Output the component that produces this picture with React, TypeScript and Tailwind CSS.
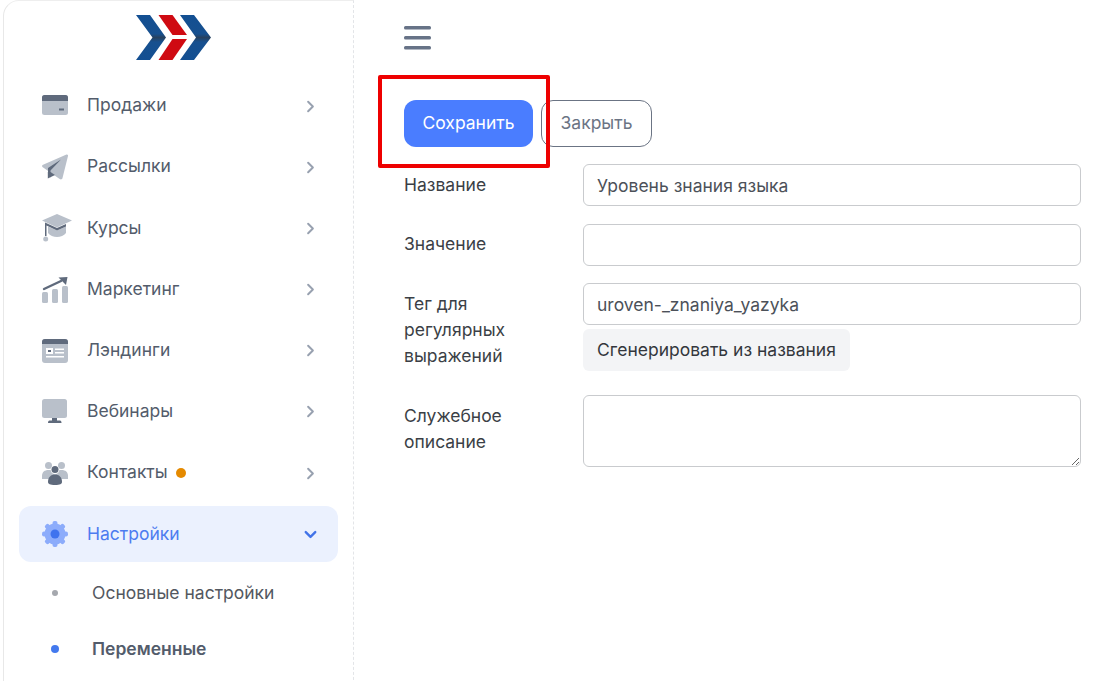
import { ChevronDown, ChevronRight } from "lucide-react";
import type { ReactNode } from "react";

const LIGHT = "#b9c0ca";
const DARK = "#5f6a7c";

function Logo() {
  return (
    <svg width="76" height="45" viewBox="0 0 76 46" preserveAspectRatio="none" aria-label="logo">
      <defs>
        <linearGradient id="blueBand" x1="0" y1="0" x2="0" y2="1">
          <stop offset="0" stopColor="#134f92" />
          <stop offset="0.42" stopColor="#17508f" />
          <stop offset="0.5" stopColor="#27415f" />
          <stop offset="0.6" stopColor="#17508f" />
          <stop offset="1" stopColor="#134f92" />
        </linearGradient>
      </defs>
      <path d="M0 0H14L30 23L14 46H0L16.500 23Z" fill="url(#blueBand)" />
      <path d="M44 0H58L75 23L58 46H44L60 23Z" fill="url(#blueBand)" />
      <path d="M22.500 0H36.500L51 20.500H36.500Z" fill="#cf0a12" />
      <path d="M36.500 24.500H51L36.500 46H22.500Z" fill="#cf0a12" />
    </svg>
  );
}

function CardIcon() {
  return (
    <svg width="26" height="26" viewBox="0 0 26 26">
      <rect y="2" width="26" height="20" rx="2.500" fill={LIGHT} />
      <path d="M0 8V4.500A2.500 2.500 0 0 1 2.500 2H23.500A2.500 2.500 0 0 1 26 4.500V8Z" fill={DARK} />
      <rect x="17" y="15.500" width="5" height="2" fill={DARK} />
    </svg>
  );
}

function PlaneIcon() {
  return (
    <svg width="26" height="26" viewBox="0 0 26 26">
      <path d="M24.500 0.500C25.500 0.200 26.200 1 26 2L20.500 24C20.200 25.500 18.800 25.800 17.700 25L0.800 13.300C-0.300 12.500 -0.100 11.200 1 10.700Z" fill={LIGHT} />
      <path d="M6 14L19 5.500L8.500 16.500V23.500L6 21Z" fill={DARK} />
      <path d="M8.500 18L13 21L5.800 24.500V18Z" fill={DARK} />
    </svg>
  );
}

function CapIcon() {
  return (
    <svg width="30" height="28" viewBox="0 0 30 28">
      <path d="M15 0L30 6.500L15 13.500L0 6.500Z" fill={LIGHT} />
      <path d="M6 12.500L15 16.500L24 12.500V19C22 21.500 18.500 23 15 23C11.500 23 8 21.500 6 19Z" fill={LIGHT} />
      <path d="M3 8.500L15 14L24 10V12.500L15 16.500L4.500 11.500V22H3Z" fill={DARK} />
      <circle cx="3.700" cy="25" r="2.500" fill={LIGHT} />
    </svg>
  );
}

function ChartIcon() {
  return (
    <svg width="26" height="26" viewBox="0 0 26 26">
      <rect y="15" width="6" height="11" rx="1.500" fill={LIGHT} />
      <rect x="10" y="12" width="6" height="14" rx="1.500" fill={LIGHT} />
      <rect x="20" y="9" width="6" height="17" rx="1.500" fill={LIGHT} />
      <path d="M2 12L19 4" stroke={DARK} strokeWidth="2.400" strokeLinecap="round" />
      <path d="M16.500 0.500L25.500 0L24 8Z" fill={DARK} />
    </svg>
  );
}

function LandingIcon() {
  return (
    <svg width="26" height="24" viewBox="0 0 26 24">
      <rect width="26" height="24" rx="3" fill={LIGHT} />
      <path d="M0 5V3A3 3 0 0 1 3 0H23A3 3 0 0 1 26 3V5Z" fill={DARK} />
      <rect x="4" y="9" width="7" height="6" fill="#fff" />
      <rect x="6" y="11" width="3" height="2" fill={DARK} />
      <rect x="13" y="9.500" width="9" height="1.500" fill="#fff" />
      <rect x="13" y="13" width="9" height="1.500" fill="#fff" />
      <rect x="4" y="17" width="18" height="1.500" fill="#fff" />
    </svg>
  );
}

function MonitorIcon() {
  return (
    <svg width="26" height="26" viewBox="0 0 26 26">
      <rect width="25" height="19" rx="2.500" fill={LIGHT} />
      <path d="M10 19H15V21.500H18C19 21.500 19.500 22.500 19.500 24H6C6 22.500 6.500 21.500 7.500 21.500H10Z" fill={DARK} />
    </svg>
  );
}

function PeopleIcon() {
  return (
    <svg width="26" height="24" viewBox="0 0 26 24">
      <circle cx="6.500" cy="4.500" r="3.500" fill={LIGHT} />
      <circle cx="19.500" cy="4.500" r="3.500" fill={LIGHT} />
      <path d="M0 15C0 11 2.500 9 6.500 9C10.500 9 13 11 13 15V18H0Z" fill={LIGHT} />
      <path d="M13 15C13 11 15.500 9 19.500 9C23.500 9 26 11 26 15V18H13Z" fill={LIGHT} />
      <circle cx="13" cy="9" r="4" fill="#fff" />
      <circle cx="13" cy="8.500" r="3.500" fill={DARK} />
      <path d="M6 21C6 16 9 13.500 13 13.500C17 13.500 20 16 20 21C20 23 18 24 13 24C8 24 6 23 6 21Z" fill={DARK} />
    </svg>
  );
}

function GearIcon() {
  return (
    <svg width="26" height="26" viewBox="0 0 26 26">
      <g fill="#8cacfb">
        <circle cx="13" cy="13" r="10.500" />
        <rect x="10.500" y="0" width="5" height="26" rx="2" />
        <rect x="10.500" y="0" width="5" height="26" rx="2" transform="rotate(45 13 13)" />
        <rect x="10.500" y="0" width="5" height="26" rx="2" transform="rotate(90 13 13)" />
        <rect x="10.500" y="0" width="5" height="26" rx="2" transform="rotate(135 13 13)" />
      </g>
      <circle cx="13" cy="13" r="4.500" fill="#3f73ee" />
    </svg>
  );
}

function MenuItem({ icon, label, dot, active }: { icon: ReactNode; label: string; dot?: boolean; active?: boolean }) {
  return (
    <div className={`flex h-14 items-center rounded-xl pl-[23px] pr-[18px] ${active ? "bg-[#ebf1fe] text-[#4d7cf0]" : "text-[#535c6b]"}`}>
      <span className="flex w-[45px] shrink-0 items-center">{icon}</span>
      <span className="-translate-y-px text-[17.500px] leading-none">{label}</span>
      {dot && <span className="ml-[8px] h-[10px] w-[10px] rounded-full bg-[#e58a00]" />}
      {active ? (
        <ChevronDown size={19} strokeWidth={3} className="ml-auto text-[#4173e8]" />
      ) : (
        <ChevronRight size={19} strokeWidth={2.500} className="ml-auto text-[#98a1b0]" />
      )}
    </div>
  );
}

const INPUT_CLS =
  "block h-[42px] w-full rounded-md border border-[#c9cbce] bg-white px-[13px] text-[17.500px] text-[#4c5159] outline-none";

export default function App() {
  return (
    <div className="flex h-[681px] w-[1107px] overflow-hidden bg-white font-['Inter',sans-serif]">
      {/* Sidebar */}
      <aside className="ml-[3px] flex h-[700px] w-[351px] shrink-0 flex-col rounded-tl-2xl border-l border-t border-r border-l-[#e8e8e8] border-t-[#eeeeee] border-r-[#e3e5e8] px-[15px] [border-right-style:dashed]">
        <div className="flex h-[74px] shrink-0 items-end justify-center pb-[15px] pr-[10px]">
          <Logo />
        </div>
        <nav className="mt-[3px] flex flex-col gap-[5.200px]">
          <MenuItem icon={<CardIcon />} label="Продажи" />
          <MenuItem icon={<PlaneIcon />} label="Рассылки" />
          <MenuItem icon={<CapIcon />} label="Курсы" />
          <MenuItem icon={<ChartIcon />} label="Маркетинг" />
          <MenuItem icon={<LandingIcon />} label="Лэндинги" />
          <MenuItem icon={<MonitorIcon />} label="Вебинары" />
          <MenuItem icon={<PeopleIcon />} label="Контакты" dot />
          <MenuItem icon={<GearIcon />} label="Настройки" active />
        </nav>
        <div className="mt-[3px] flex flex-col text-[17.500px]">
          <div className="flex h-[56px] items-center pl-[33px] text-[#535860]">
            <span className="h-[6px] w-[6px] rounded-full bg-[#a5a8ae]" />
            <span className="ml-[34px]">Основные настройки</span>
          </div>
          <div className="flex h-[56px] items-center pl-[32px] font-semibold text-[#535c6b]">
            <span className="h-[8px] w-[8px] rounded-full bg-[#4379ee]" />
            <span className="ml-[33px]">Переменные</span>
          </div>
        </div>
      </aside>

      {/* Main */}
      <main className="relative flex-1 pl-[50px] pr-[26px]">
        <svg width="28" height="24" viewBox="0 0 28 24" className="mt-[26px] block" aria-label="menu">
          <g fill="#677387">
            <rect y="0" width="27" height="3.500" rx="1.500" />
            <rect y="10" width="27" height="3.500" rx="1.500" />
            <rect y="20" width="27" height="3.500" rx="1.500" />
          </g>
        </svg>

        <div className="mt-[50px] flex gap-[8px] text-[17.500px]">
          <button className="h-[47px] w-[129px] rounded-xl bg-[#4a7dff] text-white">Сохранить</button>
          <button className="h-[47px] w-[111px] rounded-xl border border-[#6b7484] text-[#6b7484]">Закрыть</button>
        </div>

        <form className="mt-[17px] flex flex-col text-[17.500px] leading-[26px] text-[#3b3f46]">
          <div className="flex h-[60px]">
            <label className="w-[179px] shrink-0 pt-[8px]">Название</label>
            <input className={INPUT_CLS} defaultValue="Уровень знания языка" />
          </div>
          <div className="flex h-[59px]">
            <label className="w-[179px] shrink-0 pt-[7px]">Значение</label>
            <input className={INPUT_CLS} />
          </div>
          <div className="flex h-[112px]">
            <label className="w-[179px] shrink-0 pt-[8px]">
              Тег для
              <br />
              регулярных
              <br />
              выражений
            </label>
            <div className="flex-1">
              <input className={INPUT_CLS} defaultValue="uroven-_znaniya_yazyka" />
              <button type="button" className="mt-[4px] h-[42px] w-[267px] rounded-md bg-[#f3f4f6] text-[#33373d]">
                Сгенерировать из названия
              </button>
            </div>
          </div>
          <div className="flex">
            <label className="w-[179px] shrink-0 pt-[8px]">
              Служебное
              <br />
              описание
            </label>
            <textarea className="block h-[72px] w-full rounded-md border border-[#c9cbce] bg-white px-[13px] py-[8px] outline-none" />
          </div>
        </form>

        {/* Annotation frame */}
        <div className="absolute left-[24px] top-[75px] h-[93px] w-[172px] rounded-[2px] border-[4px] border-[#ee0000]" />
      </main>
    </div>
  );
}
